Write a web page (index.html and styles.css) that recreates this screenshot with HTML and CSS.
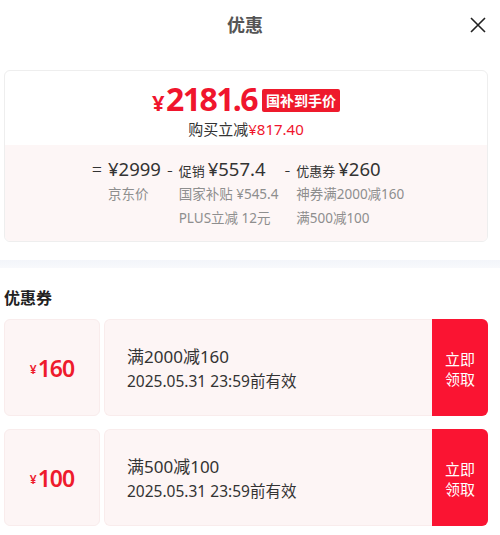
FILE: index.html
```html
<!DOCTYPE html>
<html lang="zh-CN">
<head>
    <meta charset="UTF-8">
    <meta name="viewport" content="width=device-width, initial-scale=1.0">
    <title>优惠</title>
    <link rel="stylesheet" href="styles.css">
</head>
<body>
    <div class="header">
        <h1>优惠</h1>
        <span class="close">
            <svg width="16" height="16" viewBox="0 0 16 16">
                <path d="M1 1 L15 15 M15 1 L1 15" stroke="#222" stroke-width="1.6" fill="none"/>
            </svg>
        </span>
    </div>

    <!-- 到手价汇总 -->
    <div class="summary">
        <div class="summary-top">
            <div class="price-line">
                <span class="price"><span class="yen">¥</span>2181.6</span>
                <span class="badge">国补到手价</span>
            </div>
            <div class="reduce">购买立减<span class="red">¥817.40</span></div>
        </div>
        <div class="summary-bottom">
            <div class="calc">
                <span class="sign">=</span>
                <div class="col">
                    <div class="main"><span class="num">¥2999</span></div>
                    <div class="sub">京东价</div>
                </div>
                <span class="sign">-</span>
                <div class="col">
                    <div class="main"><span class="label">促销</span><span class="num">¥557.4</span></div>
                    <div class="sub">国家补贴 ¥545.4</div>
                    <div class="sub">PLUS立减 12元</div>
                </div>
                <span class="sign">-</span>
                <div class="col">
                    <div class="main"><span class="label">优惠券</span><span class="num">¥260</span></div>
                    <div class="sub">神券满2000减160</div>
                    <div class="sub">满500减100</div>
                </div>
            </div>
        </div>
    </div>

    <div class="divider"></div>

    <h2>优惠券</h2>

    <div class="coupon">
        <div class="stub"><span class="yen">¥</span>160</div>
        <div class="body">
            <div class="info">
                <div class="rule">满2000减160</div>
                <div class="date">2025.05.31 23:59前有效</div>
            </div>
            <button type="button" class="get">立即<br>领取</button>
        </div>
    </div>

    <div class="coupon">
        <div class="stub"><span class="yen">¥</span>100</div>
        <div class="body">
            <div class="info">
                <div class="rule">满500减100</div>
                <div class="date">2025.05.31 23:59前有效</div>
            </div>
            <button type="button" class="get">立即<br>领取</button>
        </div>
    </div>
</body>
</html>
```

FILE: styles.css
```css
body {
    font-family: "Noto Sans", "Noto Sans CJK SC", sans-serif;
    background-color: #fff;
    color: #333;
    margin: 0;
    width: 500px;
}
.header {
    height: 48px;
    display: flex;
    align-items: center;
    justify-content: center;
    padding-right: 10px;
    position: relative;
}
h1 {
    margin: 0;
    font-size: 18px;
    font-weight: bold;
    color: #555;
}
.close {
    position: absolute;
    right: 14px;
    top: 17px;
    width: 16px;
    height: 16px;
}
.close svg {
    display: block;
}
.summary {
    margin: 22px 12px 0 4px;
    border: 1px solid #eee;
    border-radius: 6px;
    overflow: hidden;
}
.summary-top {
    padding: 12px 0 5px;
    text-align: center;
}
.price-line {
    display: flex;
    justify-content: center;
    align-items: center;
    gap: 5px;
    height: 34px;
}
.price {
    color: #f0152d;
    font-size: 32px;
    font-weight: bold;
    letter-spacing: -1.6px;
    line-height: 34px;
}
.price .yen {
    font-size: 22px;
    margin-right: 3px;
}
.badge {
    background-color: #ee1a2c;
    color: #fff;
    font-size: 14px;
    font-weight: bold;
    line-height: 23px;
    padding: 0 4px;
    border-radius: 2px;
}
.reduce {
    font-size: 15px;
    line-height: 22px;
    margin-top: 1px;
}
.red {
    color: #f0152d;
}
.summary-bottom {
    background-color: #fdf6f6;
    padding: 11px 0 11px;
}
.calc {
    display: flex;
    justify-content: center;
    gap: 6px;
    padding-left: 4px;
}
.sign {
    font-size: 18px;
    line-height: 26px;
    font-weight: 300;
}
.col .main {
    display: flex;
    align-items: baseline;
    gap: 3px;
    height: 26px;
}
.label {
    font-size: 13px;
}
.num {
    font-size: 18.5px;
    line-height: 26px;
}
.sub {
    font-size: 13.5px;
    line-height: 24px;
    color: #8e8e8e;
}
.divider {
    height: 8px;
    margin-top: 18px;
    background: linear-gradient(#f3f5fa, #f8f9fc);
}
h2 {
    margin: 19px 0 0 4px;
    font-size: 16px;
    line-height: 22px;
    font-weight: bold;
    color: #222;
}
.coupon {
    display: flex;
    gap: 4px;
    height: 97px;
    margin: 10px 12px 0 4px;
}
.coupon + .coupon {
    margin-top: 13px;
}
.stub {
    width: 96px;
    background-color: #fdf5f5;
    border: 1px solid #f9ecec;
    border-radius: 6px;
    box-sizing: border-box;
    display: flex;
    align-items: center;
    justify-content: center;
    color: #ee1a2c;
    font-size: 23px;
    font-weight: 600;
    letter-spacing: -1px;
}
.stub .yen {
    font-size: 12px;
    margin-right: 2px;
    margin-top: 4px;
}
.body {
    flex: 1;
    display: flex;
    background-color: #fdf5f5;
    border-radius: 6px;
    overflow: hidden;
}
.info {
    flex: 1;
    padding: 2px 0 0 22px;
    display: flex;
    flex-direction: column;
    justify-content: center;
    border: 1px solid #f9ecec;
    border-right: none;
    border-radius: 6px 0 0 6px;
}
.rule {
    font-size: 17px;
    line-height: 25px;
}
.date {
    font-size: 15.5px;
    line-height: 25px;
}
.get {
    width: 56px;
    background-color: #fa1432;
    color: #fff;
    border: none;
    font-family: inherit;
    font-size: 15px;
    line-height: 20px;
    padding: 3px 0 0;
    cursor: pointer;
}
```
